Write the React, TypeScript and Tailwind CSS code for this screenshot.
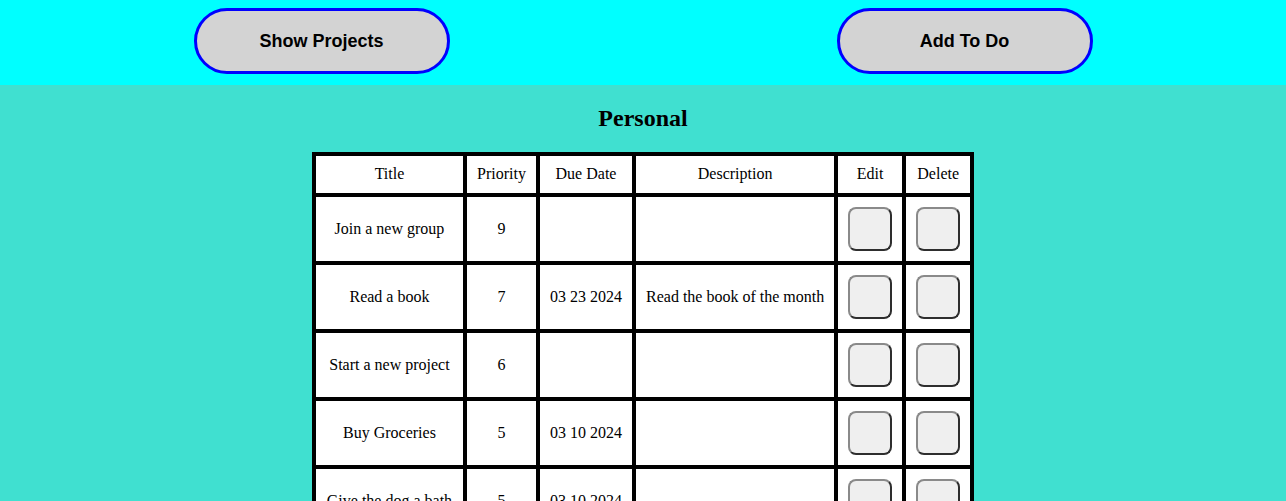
const rows = [
  { title: 'Join a new group', priority: '9', due: '', description: '' },
  { title: 'Read a book', priority: '7', due: '03 23 2024', description: 'Read the book of the month' },
  { title: 'Start a new project', priority: '6', due: '', description: '' },
  { title: 'Buy Groceries', priority: '5', due: '03 10 2024', description: '' },
  { title: 'Give the dog a bath', priority: '5', due: '03 10 2024', description: '' },
  { title: 'Clean the garage', priority: '3', due: '', description: '' },
];

const headers = ['Title', 'Priority', 'Due Date', 'Description', 'Edit', 'Delete'];

function TopButton({ label }: { label: string }) {
  return (
    <div className="flex flex-1 justify-center">
      <button className="mt-2 h-[66px] w-[256px] rounded-full border-[3px] border-[#0000ff] bg-[#d3d3d3] text-[18px] font-bold text-black font-['Liberation_Sans',Arial,sans-serif]">
        {label}
      </button>
    </div>
  );
}

function CellButton() {
  return (
    <button className="mx-auto my-px block h-11 w-11 rounded-lg border-2 border-t-[#8a8a8a] border-l-[#8a8a8a] border-r-[#2e2e2e] border-b-[#2e2e2e] bg-[#efefef]" />
  );
}

export default function App() {
  return (
    <div className="min-h-screen bg-[#40e0d0] text-black">
      {/* top bar */}
      <div className="flex h-[85px] bg-[#00ffff]">
        <TopButton label="Show Projects" />
        <TopButton label="Add To Do" />
      </div>

      <div className="flex flex-col items-center font-['Liberation_Serif','Times_New_Roman',serif]">
        <h2 className="mt-[19px] mb-[20px] text-[24px] font-bold leading-[28px]">Personal</h2>

        <table className="border-collapse border-4 border-black bg-white text-[16px]">
          <thead>
            <tr>
              {headers.map((h, i) => (
                <th
                  key={h}
                  className={`border-4 border-black pt-[9px] pb-[10px] font-normal leading-[18px] ${i === 0 ? 'px-[11px]' : 'px-[10px]'}`}
                >
                  {h}
                </th>
              ))}
            </tr>
          </thead>
          <tbody>
            {rows.map((r) => (
              <tr key={r.title}>
                <td className="border-4 border-black px-[11px] py-[9px] text-center">{r.title}</td>
                <td className="border-4 border-black px-[10px] py-[9px] text-center">{r.priority}</td>
                <td className="border-4 border-black px-[10px] py-[9px] text-center">{r.due}</td>
                <td className="border-4 border-black px-[10px] py-[9px] text-center">{r.description}</td>
                <td className="border-4 border-black px-[10px] py-[9px] text-center">
                  <CellButton />
                </td>
                <td className="border-4 border-black px-[10px] py-[9px] text-center">
                  <CellButton />
                </td>
              </tr>
            ))}
          </tbody>
        </table>
      </div>
    </div>
  );
}
